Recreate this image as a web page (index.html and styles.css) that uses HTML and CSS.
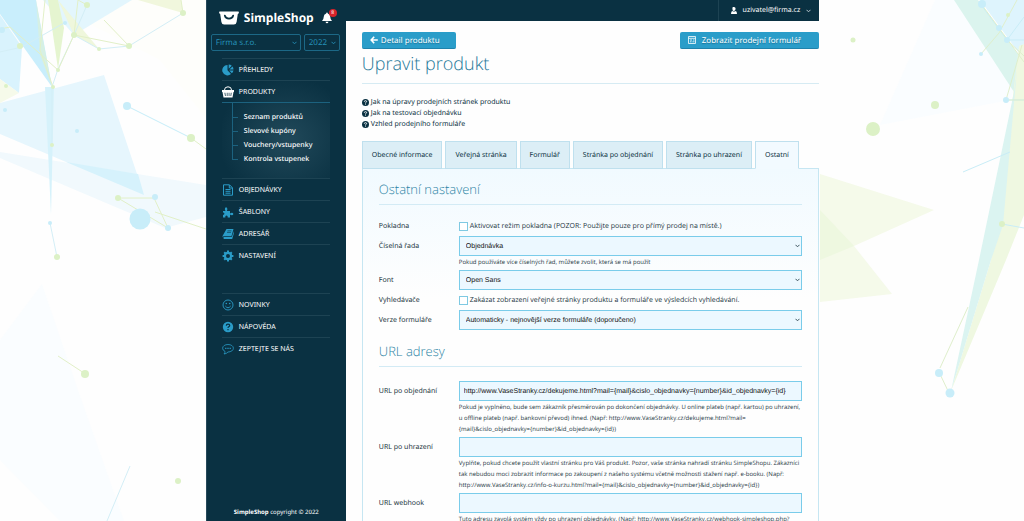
FILE: index.html
```html
<!DOCTYPE html>
<html lang="cs">
<head>
<meta charset="utf-8">
<title>SimpleShop – Upravit produkt</title>
<link rel="stylesheet" href="styles.css">
</head>
<body>
<svg class="backdrop backdrop-left" width="206" height="521" viewBox="0 0 206 521" aria-hidden="true">
  <g stroke="none">
    <path d="M43 0H135L206 0V118L160 60Z" fill="#fefefb"/>
    <path d="M0 103L104 75L144 195L0 134Z" fill="#e6f6fd"/>
    <path d="M0 152L206 185V217L165 228L0 158Z" fill="#f1f9fd"/>
    <path d="M66 162L138 174L144 195Z" fill="#d6f2fc"/>
    <path d="M0 15L22 47L19 93L0 79Z" fill="#d9f3fd"/>
    <path d="M0 0H36L52 87L10 28L0 14Z" fill="#c9eefc"/>
    <path d="M43 0H132L74 35Z" fill="#e3f6fd"/>
    <path d="M48 0H58L64 28L58 69Z" fill="#e5f5d0"/>
    <path d="M58 0L99 49L74 35Z" fill="#eff7dc"/>
    <path d="M138 0H181L183 13Z" fill="#f1f7dd"/>
    <path d="M36 0L43 40L52 87L40 55Z" fill="#d6f0e4"/>
    <path d="M45 87H54L51 215Z" fill="#d6f2fb"/>
    <path d="M0 79L19 93L0 103Z" fill="#f6faea"/>
    <path d="M0 340L42 284L78 390L124 521H60L0 460Z" fill="#fafdff"/>
  </g>
  <g fill="none" stroke="#d3eef6" stroke-width="1">
    <path d="M74 35L99 49L129 46L183 13M87 5L74 35L58 69L52 87V145M0 52L22 47L64 23M50 223L57 257M130 466L107 521"/>
    <path d="M127 106L191 138" stroke="#c5edf9"/>
  </g>
  <g fill="none" stroke="#e2f0c8" stroke-width="1">
    <path d="M78 0L74 35L58 70L10 27L0 29M45 0L40 50L53 87M78 0L87 5M74 35L129 46L104 20M181 0L183 13M118 198H154L168 228L118 198M155 212L206 229M191 138L206 149M58 356L84 373"/>
  </g>
  <g fill="#dcf1c6">
    <circle cx="183" cy="13" r="3"/><circle cx="87" cy="5" r="3"/><circle cx="74" cy="35" r="3"/><circle cx="129" cy="46" r="3"/><circle cx="99" cy="49" r="2"/><circle cx="58" cy="70" r="2"/><circle cx="53" cy="87" r="2"/><circle cx="20" cy="46" r="3"/><circle cx="6" cy="86" r="2"/><circle cx="52" cy="145" r="2"/><circle cx="191" cy="138" r="4"/><circle cx="118" cy="198" r="3"/><circle cx="57" cy="257" r="3"/><circle cx="85" cy="374" r="4"/><circle cx="178" cy="481" r="3"/>
  </g>
  <g fill="#c8edf9">
    <circle cx="127" cy="106" r="4"/><circle cx="140" cy="219" r="10.5"/><circle cx="155" cy="197" r="3"/><circle cx="168" cy="228" r="3"/><circle cx="50" cy="223" r="2"/><circle cx="77" cy="131" r="2"/><circle cx="5" cy="110" r="2"/><circle cx="65" cy="23" r="2"/><circle cx="2" cy="30" r="3"/>
  </g>
</svg>
<svg class="backdrop backdrop-right" width="204" height="521" viewBox="0 0 204 521" aria-hidden="true">
  <path d="M115 0H140L194 90L190 100L60 125Z" fill="#fafdff"/>
  <path d="M0 174L114 210L34 246L72 294L0 302Z" fill="#f5faea"/>
  <path d="M0 210L34 246L0 260Z" fill="#eef8e0"/>
  <path d="M160 0H204V60Z" fill="#def4fd"/>
  <path d="M134 0H158L204 62L194 92Z" fill="#dbf4ee"/>
  <path d="M199 46L204 44V215L186 260L131 391L171 260L190 120Z" fill="#eff8e1"/>
  <path d="M194 92L197 70L183 225L171 260L131 391L159 260Z" fill="#dbf4f1"/>
  <path d="M159 2L187 40L204 17M187 40H204M186 100H204M143 172L190 152M182 224L204 228" fill="none" stroke="#c9edf7"/>
  <path d="M197 0L179 33L161 54M187 40L204 56M202 45L186 100H204M162 5L204 62M120 368L148 307M119 372L129 393" fill="none" stroke="#dfefcc"/>
  <g fill="#dcf1c6"><circle cx="53" cy="129" r="7"/><circle cx="115" cy="105" r="4"/><circle cx="33" cy="40" r="2.5"/><circle cx="182" cy="224" r="3"/><circle cx="188" cy="15" r="2"/></g>
  <g fill="#c8edf9"><circle cx="119" cy="373" r="4"/><circle cx="130" cy="393" r="4.5"/><circle cx="186" cy="100" r="3"/><circle cx="161" cy="54" r="2"/><circle cx="187" cy="40" r="3"/><circle cx="179" cy="28" r="3"/><circle cx="162" cy="4" r="4"/></g>
</svg>

<div class="app">
  <aside class="sidebar">
    <div class="brand">
      <a class="logo" href="#">
        <svg width="20" height="14" viewBox="0 0 20 14" aria-hidden="true"><path d="M.8.500H19.200Q20 .5 19.900 1.500Q19.800 2.800 18.800 3L17.600 11Q17.200 13.500 14.800 13.500H5.200Q2.800 13.500 2.400 11L1.200 3Q.2 2.800.1 1.500Q0 .5.800.5Z" fill="#fff"/><path d="M5.800 4.500Q6.500 7.600 10 7.600T14.200 4.500" fill="none" stroke="#0a3142" stroke-width="1.700" stroke-linecap="round"/></svg>
        <span>SimpleShop</span>
      </a>
      <button class="bell" type="button" aria-label="Oznámení">
        <svg width="12" height="12" viewBox="0 0 12 12" aria-hidden="true"><path d="M6 .5Q6.800.5 6.800 1.500Q9.300 2.200 9.300 5Q9.300 7.500 11 9H1Q2.700 7.500 2.700 5Q2.700 2.200 5.200 1.500Q5.200.5 6 .5ZM4.500 9.800H7.500Q7.200 11.300 6 11.300T4.500 9.800Z" fill="#fff"/></svg>
        <span class="badge">8</span>
      </button>
    </div>
    <div class="pickers">
      <div class="pick pick-firm"><select aria-label="Firma"><option>Firma s.r.o.</option></select><svg width="5" height="4" viewBox="0 0 5 4" aria-hidden="true"><path d="M.5.800L2.500 2.800L4.500.800"/></svg></div>
      <div class="pick pick-year"><select aria-label="Rok"><option>2022</option></select><svg width="5" height="4" viewBox="0 0 5 4" aria-hidden="true"><path d="M.5.800L2.500 2.800L4.500.800"/></svg></div>
    </div>
    <nav class="menu">
      <a href="#"><svg viewBox="0 0 12 12"><path d="M5.500 1V6.200L9 10A5.200 5.200 0 1 1 5.500 1ZM6.700.5A5 5 0 0 1 9.800 1.800L6.700 4.800ZM10.500 2.600A5 5 0 0 1 11.500 5.500H7.400ZM11.500 6.600A5 5 0 0 1 9.900 9.300L7.200 6.600Z"/></svg>PŘEHLEDY</a>
      <div class="group">
        <a href="#" class="current"><svg viewBox="0 0 12 12"><path d="M2.500 4Q2.500.8 6 .8T9.500 4" fill="none" stroke="currentColor"/><path fill-rule="evenodd" d="M0 4H12V6H11.500L10.500 11.500H1.500L.5 6H0ZM2.500 6.800L3 10H3.700L3.300 6.800ZM4.800 6.800V10H5.500V6.800ZM6.700 6.800V10H7.400V6.800ZM8.800 6.800L8.500 10H9.200L9.600 6.800Z"/></svg>PRODUKTY</a>
        <ul>
          <li><a href="#">Seznam produktů</a></li>
          <li><a href="#">Slevové kupóny</a></li>
          <li><a href="#">Vouchery/vstupenky</a></li>
          <li><a href="#">Kontrola vstupenek</a></li>
        </ul>
      </div>
      <a href="#"><svg viewBox="0 0 12 12"><path d="M1.500.8H7.500L10.500 3.800V11.200H1.500ZM7.300 1V4H10.300M3.500 5.500H8.500M3.500 7.300H8.500M3.500 9.200H8.500" fill="none" stroke="currentColor"/></svg>OBJEDNÁVKY</a>
      <a href="#"><svg viewBox="0 0 12 12"><path d="M1 5H3.500Q2.500 3.500 3 2.200Q4 .5 5.200 2.200Q5.700 3.500 4.800 5H8V7.500Q9.500 6.500 10.800 7Q12 8 10.800 9Q9.500 9.500 8 8.500V11.500H5.700Q6 9.500 4.500 9.500T3.300 11.500H1V9Q2.500 8.500 2.400 7.500T1 6.500Z"/></svg>ŠABLONY</a>
      <a href="#"><svg viewBox="0 0 12 12"><path d="M4.500 1H11.500L9.500 8H2Q1 8 .8 9.500L.5 8ZM2 8.800H10L11.700 3V6L10.200 11H2Q.5 10 2 8.800Z"/><path d="M5.500 2.800H9.500M5 4.400H9" fill="none" stroke="#0a3142" stroke-width=".6"/></svg>ADRESÁŘ</a>
      <a href="#"><svg viewBox="0 0 12 12"><circle cx="6" cy="6" r="3.100" fill="none" stroke="currentColor" stroke-width="2.200"/><path d="M6 .6V2.500M6 9.500V11.400M.6 6H2.500M9.500 6H11.400M2.200 2.200L3.500 3.500M8.500 8.500L9.800 9.800M2.200 9.800L3.500 8.500M8.500 3.500L9.800 2.200" stroke="currentColor" stroke-width="2"/></svg>NASTAVENÍ</a>
    </nav>
    <nav class="menu menu-help">
      <a href="#"><svg viewBox="0 0 12 12"><circle cx="6" cy="6" r="5" fill="none" stroke="currentColor" stroke-width=".9"/><path d="M3.300 7Q6 10.500 8.700 7" fill="none" stroke="currentColor" stroke-width=".9"/><circle cx="4.300" cy="4.500" r=".8"/><circle cx="7.700" cy="4.500" r=".8"/></svg>NOVINKY</a>
      <a href="#"><svg viewBox="0 0 12 12"><circle cx="6" cy="6" r="5.200"/><path d="M4.300 4.800Q4.300 3.200 6 3.200T7.700 4.600Q7.600 5.400 6.700 5.800Q6 6.200 6 7M6 8V9.200" fill="none" stroke="#0a3142" stroke-width="1.200"/></svg>NÁPOVĚDA</a>
      <a href="#"><svg viewBox="0 0 12 12"><path d="M6 1.500C9 1.500 11.400 3 11.400 5.200S9 9 6 9Q4.500 10.800 2 11Q3.200 9.800 3 8.400Q.6 7.300.6 5.200C.6 3 3 1.500 6 1.500Z" fill="none" stroke="currentColor" stroke-width=".8"/><path d="M3.200 4.700H4.400V5.900H3.200ZM5.400 4.700H6.600V5.900H5.400ZM7.600 4.700H8.800V5.900H7.600Z"/></svg>ZEPTEJTE SE NÁS</a>
    </nav>
    <footer class="copyright"><strong>SimpleShop</strong> copyright © 2022</footer>
  </aside>

  <main class="main">
    <header class="topbar">
      <button class="user" type="button">
        <svg width="6" height="7" viewBox="0 0 6 7" aria-hidden="true"><path d="M3 0Q4.600 0 4.600 1.800T3 4T1.400 1.800T3 0ZM0 7Q0 4.200 1.500 4Q3 5 4.500 4Q6 4.200 6 7Z" fill="#fff"/></svg>
        uzivatel@firma.cz
        <svg class="chevron" width="5" height="4" viewBox="0 0 5 4" aria-hidden="true"><path d="M.5.800L2.500 2.800L4.500.800"/></svg>
      </button>
    </header>
    <div class="content">
      <div class="actions">
        <a class="btn" href="#"><svg width="8" height="8" viewBox="0 0 8 8" aria-hidden="true"><path d="M4.200.8L1.200 4L4.200 7.200M1.200 4H7.800" fill="none" stroke="#fff" stroke-width="1.600"/></svg>Detail produktu</a>
        <a class="btn btn-form" href="#"><svg width="8" height="8" viewBox="0 0 8 8" aria-hidden="true"><path d="M.5.5H7.500V7.500H.5ZM.5 2.300H7.500M2 4H4M5 4H6.500M2 5.800H3.500M4.500 5.800H6.500" fill="none" stroke="#fff" stroke-width=".8"/></svg>Zobrazit prodejní formulář</a>
      </div>
      <h1>Upravit produkt</h1>
      <ul class="help">
        <li><a href="#"><svg viewBox="0 0 7 7"><circle cx="3.500" cy="3.500" r="3.500"/><path d="M2.300 2.700Q2.300 1.700 3.500 1.700T4.600 2.600Q4.600 3.200 3.500 3.800V4.300M3.500 4.800V5.600" fill="none" stroke="#fff" stroke-width=".9"/></svg>Jak na úpravy prodejních stránek produktu</a></li>
        <li><a href="#"><svg viewBox="0 0 7 7"><circle cx="3.500" cy="3.500" r="3.500"/><path d="M2.300 2.700Q2.300 1.700 3.500 1.700T4.600 2.600Q4.600 3.200 3.500 3.800V4.300M3.500 4.800V5.600" fill="none" stroke="#fff" stroke-width=".9"/></svg>Jak na testovací objednávku</a></li>
        <li><a href="#"><svg viewBox="0 0 7 7"><circle cx="3.500" cy="3.500" r="3.500"/><path d="M2.300 2.700Q2.300 1.700 3.500 1.700T4.600 2.600Q4.600 3.200 3.500 3.800V4.300M3.500 4.800V5.600" fill="none" stroke="#fff" stroke-width=".9"/></svg>Vzhled prodejního formuláře</a></li>
      </ul>
      <nav class="tabs">
        <a href="#">Obecné informace</a>
        <a href="#">Veřejná stránka</a>
        <a href="#">Formulář</a>
        <a href="#">Stránka po objednání</a>
        <a href="#">Stránka po uhrazení</a>
        <a href="#" class="active">Ostatní</a>
      </nav>
      <form class="panel">
        <h2>Ostatní nastavení</h2>
        <div class="rows">
          <div class="row check"><label for="cash">Pokladna</label><div class="field"><input type="checkbox" id="cash"><label for="cash">Aktivovat režim pokladna (POZOR: Použijte pouze pro přímý prodej na místě.)</label></div></div>
          <div class="row"><label for="series">Číselná řada</label><div class="field"><div class="select"><select id="series"><option>Objednávka</option></select><svg width="5" height="4" viewBox="0 0 5 4" aria-hidden="true"><path d="M.5.800L2.500 2.800L4.500.800"/></svg></div><p>Pokud používáte více číselných řad, můžete zvolit, která se má použít</p></div></div>
          <div class="row"><label for="font">Font</label><div class="field"><div class="select"><select id="font"><option>Open Sans</option></select><svg width="5" height="4" viewBox="0 0 5 4" aria-hidden="true"><path d="M.5.800L2.500 2.800L4.500.800"/></svg></div></div></div>
          <div class="row check"><label for="search">Vyhledávače</label><div class="field"><input type="checkbox" id="search"><label for="search">Zakázat zobrazení veřejné stránky produktu a formuláře ve výsledcích vyhledávání.</label></div></div>
          <div class="row"><label for="version">Verze formuláře</label><div class="field"><div class="select"><select id="version"><option>Automaticky - nejnovější verze formuláře (doporučeno)</option></select><svg width="5" height="4" viewBox="0 0 5 4" aria-hidden="true"><path d="M.5.800L2.500 2.800L4.500.800"/></svg></div></div></div>
        </div>
        <h2>URL adresy</h2>
        <div class="rows rows-url">
          <div class="row"><label for="ordered">URL po objednání</label><div class="field"><input type="text" id="ordered" value="http://www.VaseStranky.cz/dekujeme.html?mail={mail}&amp;cislo_objednavky={number}&amp;id_objednavky={id}"><p>Pokud je vyplněno, bude sem zákazník přesměrován po dokončení objednávky. U online plateb (např. kartou) po uhrazení, u offline plateb (např. bankovní převod) ihned. (Např: http://www.VaseStranky.cz/dekujeme.html?mail={mail}&amp;cislo_objednavky={number}&amp;id_objednavky={id})</p></div></div>
          <div class="row"><label for="paid">URL po uhrazení</label><div class="field"><input type="text" id="paid"><p>Vyplňte, pokud chcete použít vlastní stránku pro Váš produkt. Pozor, vaše stránka nahradí stránku SimpleShopu. Zákazníci tak nebudou moci zobrazit informace po zakoupení z našeho systému včetně možnosti stažení např. e-booku. (Např: http://www.VaseStranky.cz/info-o-kurzu.html?mail={mail}&amp;cislo_objednavky={number}&amp;id_objednavky={id})</p></div></div>
          <div class="row"><label for="hook">URL webhook</label><div class="field"><input type="text" id="hook"><p>Tuto adresu zavolá systém vždy po uhrazení objednávky. (Např: http://www.VaseStranky.cz/webhook-simpleshop.php?</p></div></div>
        </div>
      </form>
    </div>
  </main>
</div>
</body>
</html>
```
FILE: styles.css
```css
* { box-sizing: border-box; }

body {
  margin: 0;
  height: 100vh;
  overflow: hidden;
  background: #fefefe;
  color: #1c3642;
  font: 7px/11px "Noto Sans", "Open Sans", sans-serif;
  text-rendering: geometricPrecision;
}

a { color: inherit; text-decoration: none; }
ul { list-style: none; margin: 0; padding: 0; }
p, h1, h2 { margin: 0; }
svg { display: block; flex: none; }
button, input, select { font: inherit; color: inherit; margin: 0; text-rendering: inherit; }
button { border: 0; background: none; padding: 0; }
select { appearance: none; }

.backdrop { position: absolute; top: 0; }
.backdrop-left { left: 0; }
.backdrop-right { right: 0; }

.app {
  position: relative;
  display: flex;
  width: 60%;
  min-width: 614px;
  height: 100%;
  margin: 0 auto;
  padding-left: 1px;
}

/* Sidebar */
.sidebar {
  display: flex;
  flex-direction: column;
  width: 140px;
  flex: none;
  background: #0a3142;
  color: #fff;
  border-left: 1px solid #27495a;
}
.brand {
  display: flex;
  align-items: center;
  justify-content: space-between;
  height: 34px;
  padding: 2px 13px 0 12px;
}
.logo { display: flex; align-items: center; gap: 5px; font: 700 12px/16px "Open Sans", sans-serif; }
.bell { position: relative; }
.badge {
  position: absolute;
  top: -3px;
  right: -4px;
  width: 8px;
  height: 8px;
  border-radius: 50%;
  background: #d8232a;
  color: #fff;
  font-size: 5px;
  line-height: 8px;
  text-align: center;
}
.pickers { display: flex; gap: 3px; padding: 0 6px 0 4px; }
.pick { position: relative; }
.pick-firm { flex: 1; }
.pick-year { width: 36px; }
.pick select {
  display: block;
  width: 100%;
  height: 17px;
  padding: 0 4px;
  border: 1px solid #1c6886;
  border-radius: 2px;
  background: transparent;
  color: #2591b9;
  font-size: 8px;
  line-height: 11px;
}
.pick svg, .select svg {
  position: absolute;
  top: 50%;
  right: 4px;
  margin-top: -2px;
  pointer-events: none;
}
.pick path, .select path, .chevron path { fill: none; stroke: #2288ae; }
.select path { stroke: #3d5560; }
.chevron path { stroke: #b9c8cf; }

.menu { margin: 7px 16px 0 15px; }
.menu > a, .current {
  display: flex;
  align-items: center;
  gap: 5px;
  height: 22px;
  padding-top: 2px;
  border-top: 1px solid #1d4353;
}
.menu svg { width: 12px; height: 12px; margin-top: -2px; fill: currentColor; color: #2a9cc8; }
.menu .current svg { color: #fff; }
.group { background: radial-gradient(ellipse at 60% 60%, #21495a, #0a3142 75%); }
.group ul {
  position: relative;
  padding: 8px 0 12px 22px;
  height: 76px;
  border-top: 1px solid #1c627f;
  font-weight: 500;
}
.group ul::before {
  content: "";
  position: absolute;
  left: 10px;
  top: 0;
  height: 56px;
  border-left: 1px solid #1c627f;
}
.group li { position: relative; line-height: 14px; }
.group li::before {
  content: "";
  position: absolute;
  left: -12px;
  top: 6px;
  width: 6px;
  border-top: 1px solid #1c627f;
}
.menu-help { margin-top: 27px; }
.copyright { margin-top: auto; padding-bottom: 3px; text-align: center; font-size: 6px; }

/* Main column */
.main { flex: 1; min-width: 0; overflow: hidden; background: #fefefe; }
.topbar {
  display: flex;
  justify-content: flex-end;
  height: 21px;
  background: #0a3142;
  color: #fff;
}
.user {
  display: flex;
  align-items: center;
  gap: 6px;
  padding: 0 8px 0 12px;
  border-left: 1px solid #1d4353;
}
.content { padding: 11px 0 0 16px; }
.actions { display: flex; justify-content: space-between; }
.btn {
  display: flex;
  align-items: center;
  gap: 3px;
  height: 17px;
  padding: 0 16px 0 8px;
  border-bottom: 1px solid #1f83ac;
  border-radius: 2px;
  background: #2a9dc9;
  color: #fff;
  font-size: 8px;
  text-shadow: 0 1px 1px #1c7397;
}
.btn-form { gap: 6px; padding-right: 18px; }
h1 {
  height: 35px;
  border-bottom: 1px solid #d6ebf3;
  color: #1d7899;
  font-family: "Open Sans", sans-serif;
  font-size: 18px;
  font-weight: 300;
  line-height: 30px;
}
.help { padding: 13px 0 11px; color: #0a3142; }
.help a { display: flex; align-items: center; gap: 2px; }
.help svg { width: 7px; height: 7px; fill: #0a3142; }

.tabs { position: relative; display: flex; gap: 3px; height: 28px; margin-bottom: -1px; color: #0a3142; }
.tabs a {
  padding: 8px 9px 0;
  border: 1px solid #bfe0ee;
  background: #dceef6;
}
.tabs .active { background: #f2faff; border-bottom-color: #f2faff; }

.panel {
  padding: 11px 16px 0;
  border: 1px solid #c6e6f2;
  background: linear-gradient(#f1faff, #fefefe 130px);
}
h2 {
  height: 25px;
  border-bottom: 1px solid #d3ebf5;
  color: #2b83a4;
  font-family: "Open Sans", sans-serif;
  font-size: 13px;
  font-weight: 300;
  line-height: 18px;
}
.rows { padding: 16px 0 12px; }
.rows-url { padding-top: 14px; }
.row { display: grid; grid-template-columns: 80px 1fr; }
.row > label { padding-top: 5px; }
.check { height: 15px; }
.check > label { padding-top: 0; }
.row:not(:first-child).check { height: 20px; padding-top: 5px; }
.field { min-width: 0; font-family: "Open Sans", sans-serif; }
.check .field { display: flex; align-items: flex-start; gap: 2px; }
input[type="checkbox"] {
  appearance: none;
  width: 9px;
  height: 9px;
  margin-top: 1px;
  border: 1px solid #7fc9e2;
  background: #fff;
}
.select { position: relative; }
.select select, input[type="text"] {
  display: block;
  width: 100%;
  height: 20px;
  padding: 1px 6px 0;
  border: 1px solid #7accea;
  border-radius: 0;
  background: #ecf8ff;
  color: #111;
  font: 7px/12px "Liberation Sans", sans-serif;
}
.select svg { right: 2px; }
input[type="text"] { padding: 0 4px; }
.field p { padding: 1px 0 2px; font-size: 6px; line-height: 11px; }
```
